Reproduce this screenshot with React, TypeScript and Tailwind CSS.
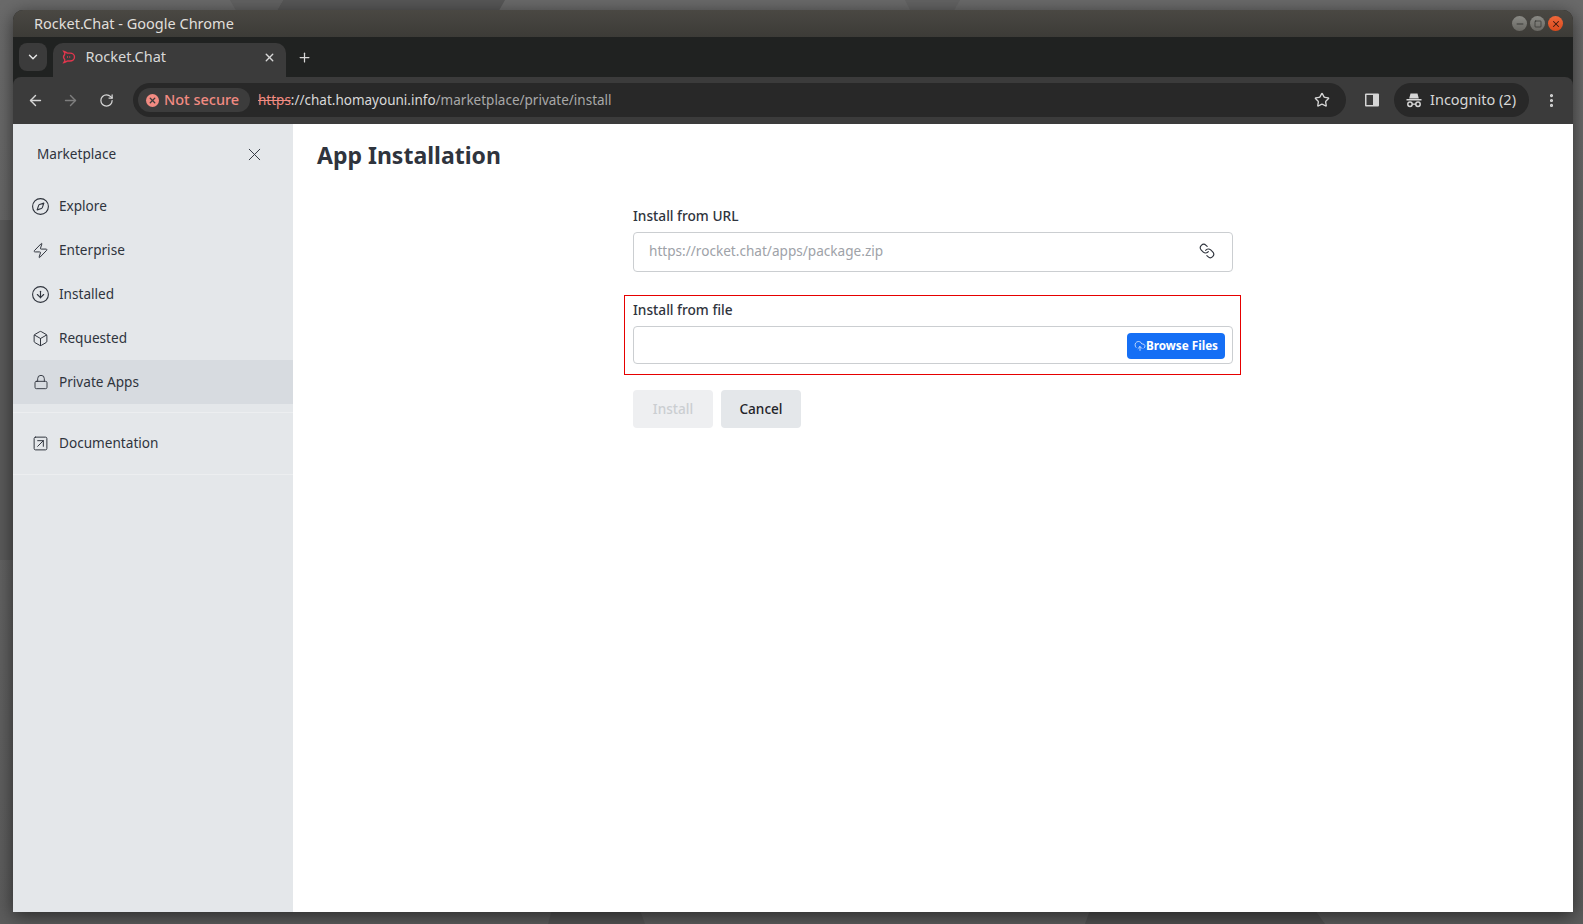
import { ArrowLeft, ArrowRight, Box, ChevronDown, CircleArrowDown, CloudUpload, Compass, EllipsisVertical, Link, Lock, Minus, Plus, RotateCw, Square, SquareArrowUpRight, Star, X, Zap } from "lucide-react";

const navItems = [
  { label: "Explore", icon: Compass, size: 19 },
  { label: "Enterprise", icon: Zap, size: 17 },
  { label: "Installed", icon: CircleArrowDown, size: 19 },
  { label: "Requested", icon: Box, size: 17 },
  { label: "Private Apps", icon: Lock, size: 16, active: true },
];

function NavRow({ label, icon: Icon, size, active }: { label: string; icon: typeof Compass; size: number; active?: boolean }) {
  return (
    <div className={`flex h-11 items-center gap-[9px] pl-[18px] text-[13.6px] text-[#2f343d] ${active ? "bg-[#d7dbe0]" : ""}`}>
      <span className="flex w-[19px] justify-center"><Icon size={size} strokeWidth={1.4} /></span>
      <span>{label}</span>
    </div>
  );
}

function Favicon() {
  return (
    <svg width="14" height="14" viewBox="0 0 14 14" fill="none" stroke="#e0364d" strokeWidth="1.4">
      <path d="M2 1.500c2 .6 3 1.600 3.500 1.600H8c2.500 0 4.500 1.600 4.500 3.900S10.500 11 8 11H5.500C5 11 4 12 2 12.500c.8-1.200 1-2.300.7-3C1.900 8.500 1.500 7.800 1.500 7c0-.8.400-1.500 1.200-2.500.3-.7.100-1.800-.7-3z" />
      <path d="M5 7h4" strokeDasharray="1 1.200" />
    </svg>
  );
}

function IncognitoIcon() {
  return (
    <svg width="18" height="18" viewBox="0 0 18 18" fill="#d6d6d6">
      <path d="M5.500 2.500h7L13.800 7.500H4.200z" />
      <rect x="1.500" y="8" width="15" height="1.500" />
      <circle cx="5" cy="13.300" r="2.200" fill="none" stroke="#d6d6d6" strokeWidth="1.500" />
      <circle cx="13" cy="13.300" r="2.200" fill="none" stroke="#d6d6d6" strokeWidth="1.500" />
      <rect x="7" y="12.500" width="4" height="1.300" />
    </svg>
  );
}

function SidePanelIcon() {
  return (
    <svg width="16" height="16" viewBox="0 0 16 16">
      <rect x="1" y="1.500" width="14" height="13" rx="1" fill="#d6d6d6" />
      <rect x="2.500" y="3" width="6.500" height="10" fill="#3b3b3b" />
    </svg>
  );
}

// desktop wallpaper that peeks out around the window
function Wallpaper() {
  return (
    <svg className="absolute inset-0" width="1583" height="924" viewBox="0 0 1583 924">
      <defs>
        <linearGradient id="wall" x1="0" y1="0" x2="0" y2="1">
          <stop offset="0" stopColor="#6a6a6a" />
          <stop offset="1" stopColor="#5c5c5c" />
        </linearGradient>
      </defs>
      <rect width="1583" height="924" fill="url(#wall)" />
      <polygon points="283,0 505,0 497,14 275,14" fill="#575757" />
      <polygon points="230,0 283,0 275,14 238,14" fill="#626262" />
      <polygon points="905,0 960,0 952,14 912,14" fill="#636363" />
      <polygon points="1090,910 1315,910 1325,924 1085,924" fill="#505050" />
      <polygon points="552,910 640,910 645,924 548,924" fill="#535353" />
      <polygon points="0,220 13,220 13,560 0,560" fill="#5a5a5a" />
    </svg>
  );
}

export default function App() {
  return (
    <div className="relative flex h-[924px] w-[1583px] flex-col pb-3 pl-[13px] pr-[10px] pt-[10px] font-['Noto_Sans',sans-serif]">
      <Wallpaper />
      <div className="relative flex min-h-0 flex-1 flex-col overflow-hidden rounded-t-[10px] bg-[#202221] shadow-[0_4px_18px_rgba(0,0,0,0.55)]">
        <div className="flex h-[27px] items-center justify-between bg-gradient-to-b from-[#4a4843] to-[#3c3b37] pl-[21px] pr-[10px]">
          <span className="text-[14.5px] text-[#e0dfdb]">Rocket.Chat - Google Chrome</span>
          <div className="flex items-center gap-[3px]">
            <span className="flex h-[15px] w-[15px] items-center justify-center rounded-full bg-gradient-to-b from-[#8a8a85] to-[#696863] text-[#2e2e2c]"><Minus size={10} /></span>
            <span className="flex h-[15px] w-[15px] items-center justify-center rounded-full bg-gradient-to-b from-[#8a8a85] to-[#696863] text-[#2e2e2c]"><Square size={8} /></span>
            <span className="flex h-[15px] w-[15px] items-center justify-center rounded-full bg-gradient-to-b from-[#f0683a] to-[#d84a1c] text-[#3a1a10]"><X size={10} strokeWidth={2.5} /></span>
          </div>
        </div>

        <div className="flex h-10 items-end gap-[6px] pl-[6px]">
          <div className="mb-[6px] flex h-7 w-7 items-center justify-center rounded-lg bg-[#3b3b3b] text-[#e3e3e3]"><ChevronDown size={14} strokeWidth={2.5} /></div>
          <div className="flex h-[34px] w-[233px] items-center rounded-t-[10px] bg-[#3b3b3b] pb-[6px] pl-[9px] pr-[10px] text-[#d8d8d8]">
            <Favicon />
            <span className="ml-[9.5px] flex-1 text-[14.5px]">Rocket.Chat</span>
            <X size={13} strokeWidth={2.5} />
          </div>
          <div className="mb-[12px] ml-[5px] text-[#d8d8d8]"><Plus size={15} strokeWidth={2} /></div>
        </div>

        <div className="flex h-[47px] items-center rounded-t-lg bg-[#3b3b3b] pb-px pl-[14px] pr-[13px]">
          <ArrowLeft size={17} strokeWidth={2} className="text-[#d6d6d6]" />
          <ArrowRight size={17} strokeWidth={2} className="ml-[18px] text-[#7e7e7e]" />
          <RotateCw size={15} strokeWidth={2} className="ml-5 text-[#d6d6d6]" />
          <div className="ml-[19px] flex h-[34px] w-[1213px] items-center rounded-full bg-[#282828] pl-[5px] pr-[16px]">
            <div className="flex h-6 w-[112px] items-center gap-[5px] rounded-full bg-[#3c3c3c] pl-2 text-[14.5px] font-medium text-[#f28b82]">
              <span className="flex h-[13px] w-[13px] items-center justify-center rounded-full bg-[#f28b82] text-[#3c3c3c]"><X size={9} strokeWidth={3.5} /></span>
              Not secure
            </div>
            <div className="ml-2 flex-1 text-[13.5px] text-[#d8d8d8]"><span className="text-[#f28b82] line-through">https</span>://chat.homayouni.info<span className="text-[#a8a8a8]">/marketplace/private/install</span></div>
            <Star size={16} strokeWidth={2} className="text-[#d6d6d6]" />
          </div>
          <div className="ml-[18px]"><SidePanelIcon /></div>
          <div className="ml-[14px] flex h-[34px] w-[135px] items-center gap-[7px] rounded-full bg-[#282828] pl-[11px] text-[14.5px] text-[#d6d6d6]">
            <IncognitoIcon />
            Incognito (2)
          </div>
          <EllipsisVertical size={17} strokeWidth={2.5} className="ml-[14px] text-[#d6d6d6]" />
        </div>

        <div className="flex min-h-0 flex-1 bg-white">
          <aside className="w-[280px] bg-[#e4e7ea]">
            <div className="flex h-[60px] items-center justify-between pl-6 pr-[28px] text-[13.6px] text-[#2f343d]">
              Marketplace
              <X size={21} strokeWidth={1.1} />
            </div>
            <nav>
              {navItems.map((item) => (
                <NavRow key={item.label} {...item} />
              ))}
              <div className="mt-2 border-t border-[#eceef0]" />
              <div className="pt-2"><NavRow label="Documentation" icon={SquareArrowUpRight} size={17} /></div>
              <div className="mt-[9px] border-t border-[#eceef0]" />
            </nav>
          </aside>

          <main className="flex-1">
            <h1 className="pl-6 pt-[15px] text-[23px] font-bold leading-8 text-[#2f343d]">App Installation</h1>
            <div className="mx-auto mt-[35px] w-[600px]">
              <label className="block text-[13.7px] font-medium leading-5 text-[#2f343d]">Install from URL</label>
              <div className="mt-[6px] flex h-10 items-center justify-between rounded border border-[#cbced1] pb-[2px] pl-[15px] pr-[17px] text-[13.6px] text-[#9ea2a8]">
                https://rocket.chat/apps/package.zip
                <Link size={16} strokeWidth={1.7} className="-scale-x-100 text-[#2f343d]" />
              </div>

              <div className="-ml-[9px] -mr-[8px] mt-[23px] border border-[#e60000] pb-[10px] pl-2 pr-[7px] pt-1">
                <label className="block text-[13.7px] font-medium leading-5 text-[#2f343d]">Install from file</label>
                <div className="mt-[6px] flex h-[38px] items-center justify-end rounded border border-[#cbced1] pr-[7px]">
                  <button className="mt-[2px] flex h-[26px] w-[98px] items-center justify-center rounded bg-[#156ff5] text-[11.7px] font-bold text-white">
                    <CloudUpload size={12} strokeWidth={1.4} />
                    Browse Files
                  </button>
                </div>
              </div>

              <div className="mt-[15px] flex gap-2">
                <button className="h-[38px] w-[80px] rounded bg-[#eeeff1] text-[13.6px] font-medium text-[#cbced1]">Install</button>
                <button className="h-[38px] w-[80px] rounded bg-[#e4e7ea] text-[13.6px] font-medium text-[#1f2329]">Cancel</button>
              </div>
            </div>
          </main>
        </div>
      </div>
    </div>
  );
}
